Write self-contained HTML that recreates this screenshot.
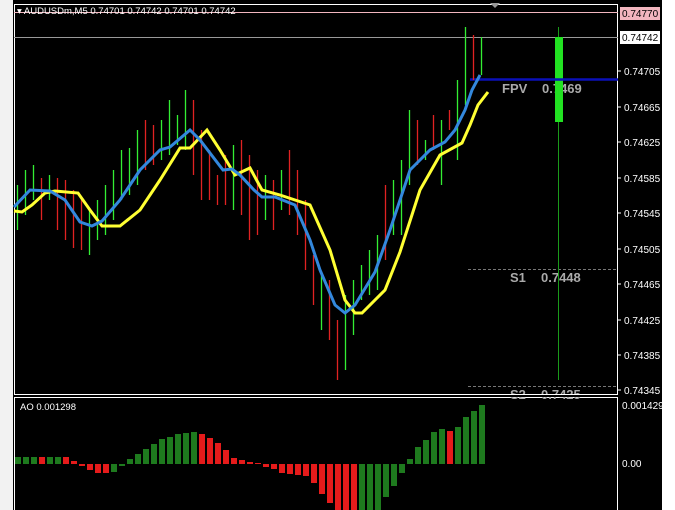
<!DOCTYPE html>
<html><head><style>
html,body{margin:0;padding:0;background:#fff;width:675px;height:510px;overflow:hidden}
svg{display:block}
text{font-family:"Liberation Sans",sans-serif}
</style></head><body>
<svg width="675" height="510" xmlns="http://www.w3.org/2000/svg">
<rect x="0" y="0" width="675" height="510" fill="#fff"/>
<rect x="0" y="0" width="14" height="510" fill="#f2f2f2"/>
<rect x="13" y="0" width="649" height="510" fill="#000"/>
<rect x="14.5" y="4.5" width="603" height="390" fill="none" stroke="#fff" stroke-width="1"/>
<line x1="14" y1="397.5" x2="618" y2="397.5" stroke="#fff"/>
<line x1="617.5" y1="397" x2="617.5" y2="510" stroke="#fff"/>
<line x1="14.5" y1="397" x2="14.5" y2="510" stroke="#fff"/>
<polygon points="490,3 500,3 495,8" fill="#999"/>
<line x1="14" y1="12.5" x2="618" y2="12.5" stroke="#f2b6bf"/>
<line x1="14" y1="37.5" x2="618" y2="37.5" stroke="#999"/>
<text x="17" y="14" font-size="9.5" fill="#fff">▾ AUDUSDm,M5  0.74701 0.74742 0.74701 0.74742</text>
<rect x="620" y="7" width="40" height="13" fill="#f2b6bf"/>
<text x="622" y="17" font-size="10" fill="#000">0.74770</text>
<rect x="620" y="31" width="40" height="13" fill="#fff"/>
<text x="622" y="41" font-size="10" fill="#000">0.74742</text>
<g font-size="10" fill="#fff">
<text x="624" y="75">0.74705</text><text x="624" y="111">0.74665</text><text x="624" y="146">0.74625</text>
<text x="624" y="182">0.74585</text><text x="624" y="217">0.74545</text><text x="624" y="253">0.74505</text>
<text x="624" y="288">0.74465</text><text x="624" y="324">0.74425</text><text x="624" y="359">0.74385</text>
<text x="624" y="394">0.74345</text><text x="622" y="409">0.001429</text><text x="622" y="467">0.00</text>
</g>
<g stroke="#fff"><line x1="618" y1="71" x2="621" y2="71"/><line x1="618" y1="107" x2="621" y2="107"/><line x1="618" y1="142" x2="621" y2="142"/><line x1="618" y1="178" x2="621" y2="178"/><line x1="618" y1="213" x2="621" y2="213"/><line x1="618" y1="249" x2="621" y2="249"/><line x1="618" y1="284" x2="621" y2="284"/><line x1="618" y1="320" x2="621" y2="320"/><line x1="618" y1="355" x2="621" y2="355"/><line x1="618" y1="390" x2="621" y2="390"/></g>
<line x1="468" y1="269.5" x2="618" y2="269.5" stroke="#777" stroke-dasharray="3,2"/>
<line x1="468" y1="386.5" x2="618" y2="386.5" stroke="#777" stroke-dasharray="3,2"/>
<g font-size="13" font-weight="bold" fill="#aaa">
<text x="502" y="93">FPV</text><text x="542" y="93">0.7469</text>
<text x="510" y="282">S1</text><text x="541" y="282">0.7448</text>
<text x="510" y="399">S2</text><text x="541" y="399">0.7425</text>
</g>
<line x1="558.5" y1="27" x2="558.5" y2="380" stroke="#1a9a1a"/>
<rect x="555" y="37" width="8" height="85" fill="#22e222"/>
<line x1="470" y1="79.5" x2="618" y2="79.5" stroke="#0a10b8" stroke-width="2.5"/>
<rect x="14" y="395" width="604" height="2" fill="#000"/>
<line x1="14" y1="394.5" x2="618" y2="394.5" stroke="#fff"/>
<g stroke-width="1.3">
<path stroke="#33ee33" d="M17.5 185V230M25.5 170V215M33.5 165V200M49.5 175V200M89.5 210V255M97.5 200V240M105.5 185V235M113.5 170V220M121.5 150V200M129.5 148V195M137.5 130V185M161.5 120V160M169.5 100V155M177.5 115V145M185.5 90V150M233.5 145V210M265.5 175V220M281.5 170V210M321.5 275V330M345.5 295V370M353.5 280V335M361.5 265V300M369.5 250V295M377.5 235V290M393.5 180V235M401.5 160V235M409.5 110V185M425.5 140V160M441.5 120V185M457.5 80V160M465.5 27V105M481.5 37V75"/>
<path stroke="#e02222" d="M41.5 178V220M57.5 178V230M65.5 180V240M73.5 190V248M81.5 200V250M145.5 120V170M153.5 125V165M193.5 100V175M201.5 130V200M209.5 150V200M217.5 175V205M225.5 155V205M241.5 140V215M249.5 155V240M257.5 170V235M273.5 180V230M289.5 150V215M297.5 170V235M305.5 200V270M313.5 255V305M329.5 280V340M337.5 320V380M385.5 185V260M417.5 120V165M433.5 115V150M449.5 110V130M473.5 35V80"/>
</g>
<polyline fill="none" stroke="#ffff33" stroke-width="3" points="14,211 22,212 32,205 45,193 55,191 78,193 90,210 102,226 120,226 140,210 160,180 180,148 190,148 207,130 220,150 235,175 250,168 262,190 280,195 310,205 330,250 345,300 355,313 362,313 385,290 400,252 420,190 440,155 462,143 470,125 478,105 488,92"/>
<polyline fill="none" stroke="#3388dd" stroke-width="3" points="14,207 30,190 50,191 65,200 80,222 92,226 102,221 120,200 140,170 160,150 170,147 190,130 200,140 223,170 232,169 240,175 254,190 262,197 275,197 295,205 310,240 320,270 335,305 345,313 355,305 375,272 390,230 410,170 430,150 445,142 455,130 465,110 472,90 480,75"/>
<text x="20" y="410" font-size="9.5" fill="#fff">AO 0.001298</text>
<g>
<rect x="15" y="457" width="6" height="7" fill="#1e7a1e"/><rect x="23" y="457" width="6" height="7" fill="#1e7a1e"/><rect x="31" y="457" width="6" height="7" fill="#1e7a1e"/><rect x="39" y="457" width="6" height="7" fill="#e51b1b"/><rect x="47" y="457" width="6" height="7" fill="#1e7a1e"/><rect x="55" y="457" width="6" height="7" fill="#1e7a1e"/><rect x="63" y="457" width="6" height="7" fill="#e51b1b"/><rect x="71" y="461" width="6" height="3" fill="#e51b1b"/><rect x="79" y="464" width="6" height="2" fill="#e51b1b"/><rect x="87" y="464" width="6" height="6" fill="#e51b1b"/><rect x="95" y="464" width="6" height="9" fill="#e51b1b"/><rect x="103" y="464" width="6" height="9" fill="#e51b1b"/><rect x="111" y="464" width="6" height="8" fill="#1e7a1e"/><rect x="119" y="464" width="6" height="2" fill="#1e7a1e"/><rect x="127" y="459" width="6" height="5" fill="#1e7a1e"/><rect x="135" y="454" width="6" height="10" fill="#1e7a1e"/><rect x="143" y="449" width="6" height="15" fill="#1e7a1e"/><rect x="151" y="444" width="6" height="20" fill="#1e7a1e"/><rect x="159" y="439" width="6" height="25" fill="#1e7a1e"/><rect x="167" y="437" width="6" height="27" fill="#1e7a1e"/><rect x="175" y="434" width="6" height="30" fill="#1e7a1e"/><rect x="183" y="433" width="6" height="31" fill="#1e7a1e"/><rect x="191" y="432" width="6" height="32" fill="#1e7a1e"/><rect x="199" y="434" width="6" height="30" fill="#e51b1b"/><rect x="207" y="438" width="6" height="26" fill="#e51b1b"/><rect x="215" y="443" width="6" height="21" fill="#e51b1b"/><rect x="223" y="450" width="6" height="14" fill="#e51b1b"/><rect x="231" y="458" width="6" height="6" fill="#e51b1b"/><rect x="239" y="460" width="6" height="4" fill="#e51b1b"/><rect x="247" y="462" width="6" height="2" fill="#e51b1b"/><rect x="255" y="463" width="6" height="1" fill="#e51b1b"/><rect x="263" y="464" width="6" height="3" fill="#e51b1b"/><rect x="271" y="464" width="6" height="5" fill="#e51b1b"/><rect x="279" y="464" width="6" height="9" fill="#e51b1b"/><rect x="287" y="464" width="6" height="10" fill="#e51b1b"/><rect x="295" y="464" width="6" height="11" fill="#e51b1b"/><rect x="303" y="464" width="6" height="12" fill="#e51b1b"/><rect x="311" y="464" width="6" height="19" fill="#e51b1b"/><rect x="319" y="464" width="6" height="30" fill="#e51b1b"/><rect x="327" y="464" width="6" height="39" fill="#e51b1b"/><rect x="335" y="464" width="6" height="46" fill="#e51b1b"/><rect x="343" y="464" width="6" height="46" fill="#e51b1b"/><rect x="351" y="464" width="6" height="46" fill="#e51b1b"/><rect x="359" y="464" width="6" height="46" fill="#1e7a1e"/><rect x="367" y="464" width="6" height="46" fill="#1e7a1e"/><rect x="375" y="464" width="6" height="46" fill="#1e7a1e"/><rect x="383" y="464" width="6" height="33" fill="#1e7a1e"/><rect x="391" y="464" width="6" height="22" fill="#1e7a1e"/><rect x="399" y="464" width="6" height="9" fill="#1e7a1e"/><rect x="407" y="459" width="6" height="5" fill="#1e7a1e"/><rect x="415" y="447" width="6" height="17" fill="#1e7a1e"/><rect x="423" y="440" width="6" height="24" fill="#1e7a1e"/><rect x="431" y="432" width="6" height="32" fill="#1e7a1e"/><rect x="439" y="429" width="6" height="35" fill="#1e7a1e"/><rect x="447" y="431" width="6" height="33" fill="#e51b1b"/><rect x="455" y="427" width="6" height="37" fill="#1e7a1e"/><rect x="463" y="417" width="6" height="47" fill="#1e7a1e"/><rect x="471" y="411" width="6" height="53" fill="#1e7a1e"/><rect x="479" y="405" width="6" height="59" fill="#1e7a1e"/>
</g>
</svg>
</body></html>
